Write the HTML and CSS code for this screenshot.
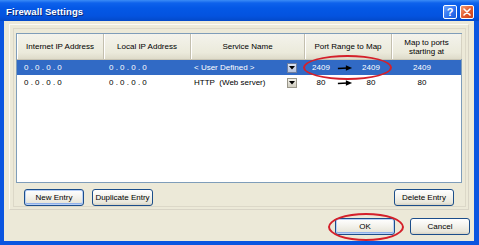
FILE: index.html
```html
<!DOCTYPE html>
<html>
<head>
<meta charset="utf-8">
<link rel="stylesheet" href="styles.css">
</head>
<body>
<div class="window">
  <div class="titlebar">
    <span class="title">Firewall Settings</span>
    <div class="tbtns">
      <span class="tbtn help">?</span>
      <span class="tbtn close"><svg width="8" height="8" viewBox="0 0 8 8"><path d="M1 1 L7 7 M7 1 L1 7" stroke="#fff" stroke-width="1.6" stroke-linecap="round"/></svg></span>
    </div>
  </div>
  <div class="client">
    <div class="panel">
      <div class="panel-inner">
        <div class="listview">
          <div class="lv-header">
            <div class="hc">Internet IP Address</div>
            <div class="hc">Local IP Address</div>
            <div class="hc">Service Name</div>
            <div class="hc">Port Range to Map</div>
            <div class="hc two">Map to ports<br>starting at</div>
          </div>
          <div class="lv-row selected">
            <div class="c c1">0 . 0 . 0 . 0</div>
            <div class="c c2">0 . 0 . 0 . 0</div>
            <div class="c c3"><span>&lt; User Defined &gt;</span><span class="dd"><svg width="6" height="4" viewBox="0 0 6 4"><path d="M0 0 H6 L3 3.5 Z" fill="#000"/></svg></span></div>
            <div class="c c4"><span class="n1">2409</span><span class="arr"><svg width="18" height="8" viewBox="0 0 18 8"><path d="M1 4.5 L12 4" stroke="#000" stroke-width="1.6"/><path d="M10 0.8 L17 4 L10 7.2 Z" fill="#000"/></svg></span><span class="n2">2409</span></div>
            <div class="c c5">2409</div>
          </div>
          <div class="lv-row">
            <div class="c c1">0 . 0 . 0 . 0</div>
            <div class="c c2">0 . 0 . 0 . 0</div>
            <div class="c c3"><span>HTTP&nbsp; (Web server)</span><span class="dd"><svg width="6" height="4" viewBox="0 0 6 4"><path d="M0 0 H6 L3 3.5 Z" fill="#000"/></svg></span></div>
            <div class="c c4"><span class="n1">80</span><span class="arr"><svg width="18" height="8" viewBox="0 0 18 8"><path d="M1 4.5 L12 4" stroke="#000" stroke-width="1.6"/><path d="M10 0.8 L17 4 L10 7.2 Z" fill="#000"/></svg></span><span class="n2">80</span></div>
            <div class="c c5">80</div>
          </div>
        </div>
        <div class="btn-row">
          <div class="btn-group">
            <button class="btn focus">New Entry</button>
            <button class="btn wide">Duplicate Entry</button>
          </div>
          <button class="btn">Delete Entry</button>
        </div>
      </div>
    </div>
    <div class="dialog-btns">
      <button class="btn default">OK</button>
      <button class="btn">Cancel</button>
    </div>
  </div>
  <div class="annot annot-port"></div>
  <div class="annot annot-ok"></div>
</div>
</body>
</html>
```

FILE: styles.css
```css
* { box-sizing: border-box; }
html, body { margin: 0; padding: 0; }
body {
  width: 479px;
  height: 245px;
  overflow: hidden;
  font-family: "Liberation Sans", Arial, sans-serif;
  font-size: 8px;
  color: #000;
}
.window {
  position: relative;
  width: 479px;
  height: 245px;
  background: #0a55e0;
  display: flex;
  flex-direction: column;
}
.titlebar {
  height: 21px;
  flex: none;
  display: flex;
  align-items: center;
  justify-content: space-between;
  padding: 0 5px 0 6px;
  background: linear-gradient(#3b8cf6 0, #0e62ec 3px, #0458e6 8px, #0453df 16px, #0349c9 21px);
}
.title {
  color: #fff;
  font-weight: bold;
  font-size: 9.5px;
  text-shadow: 1px 1px 0 #0a2a7a;
  letter-spacing: 0.1px;
  margin-top: 1px;
}
.tbtns { display: flex; gap: 3px; margin-top: 3px; }
.tbtn {
  width: 14px;
  height: 14px;
  border: 1px solid #fff;
  border-radius: 2px;
  display: flex;
  align-items: center;
  justify-content: center;
  color: #fff;
  font-weight: bold;
  font-size: 11px;
  line-height: 1;
}
.help { background: linear-gradient(135deg, #6aa1fb, #2a6ff0 60%, #1c5ad8); }
.close { background: linear-gradient(135deg, #f29a73, #e2582b 55%, #c9401c); }
.client {
  flex: none;
  height: 220px;
  margin: 0 5px 0 4px;
  background: #ece9d8;
  padding: 3px 0 0 0;
}
.panel {
  margin: 0 5px 0 5px;
  border: 1px solid #fbfaf6;
  border-right-color: #d8d4c6;
  border-bottom-color: #d8d4c6;
  padding: 3px 2px 2px 3px;
  height: 186px;
}
.panel-inner {
  height: 100%;
  border: 1px solid #dcd8c8;
  padding: 4px 3px 0 2px;
}
.listview {
  height: 150px;
  border: 1px solid #7f9db9;
  background: #fff;
}
.lv-header {
  display: grid;
  grid-template-columns: 87px 87px 114px 87px 70px;
  height: 26px;
  background: linear-gradient(#f4f3ec, #ebeadb 75%, #dedbca);
  border-bottom: 1px solid #c9c5b4;
}
.hc {
  display: flex;
  align-items: center;
  justify-content: center;
  text-align: center;
  border-right: 1px solid #c3bfae;
  box-shadow: inset 1px 0 0 #fff;
  line-height: 9px;
}
.hc:last-child { border-right: 1px solid #d6d2c2; }
.lv-row {
  display: grid;
  grid-template-columns: 87px 87px 114px 87px 70px;
  height: 15px;
  align-items: center;
}
.lv-row.selected { background: #316ac5; color: #fff; }
.c { white-space: nowrap; }
.c1 { padding-left: 7px; }
.c2 { padding-left: 5px; }
.c3 {
  display: flex;
  justify-content: space-between;
  align-items: center;
  padding-left: 3px;
  padding-right: 8px;
}
.dd {
  width: 10px;
  height: 10px;
  background: linear-gradient(#f2f1ea, #cfccbf);
  border: 1px solid #9a978a;
  display: flex;
  align-items: center;
  justify-content: center;
}
.selected .dd { background: linear-gradient(#dbe3f3, #b7c3dc); border-color: #6f7fa0; }
.c4 { display: flex; align-items: center; }
.n1 { width: 32px; text-align: center; }
.arr { width: 16px; display: flex; justify-content: center; }
.n2 { width: 36px; text-align: center; }
.c5 { text-align: center; padding-right: 10px; }
.btn-row {
  display: flex;
  justify-content: space-between;
  padding: 6px 8px 0 8px;
}
.btn-group { display: flex; gap: 8px; }
.btn {
  font-family: "Liberation Sans", Arial, sans-serif;
  font-size: 8px;
  color: #000;
  width: 60px;
  height: 17px;
  padding: 0;
  border: 1px solid #1c4e8a;
  border-radius: 3px;
  background: linear-gradient(#ffffff, #f5f4ef 40%, #e8e6da 85%, #d6d2c4);
}
.btn.wide { width: 61px; }
.btn.focus, .btn.default {
  box-shadow: inset 0 0 0 1px #b8d0f6, inset 0 -1px 0 1px #8fb0ea;
}
.dialog-btns {
  display: flex;
  justify-content: flex-end;
  gap: 15px;
  margin-top: 8px;
  padding-right: 4px;
}
.annot {
  position: absolute;
  border: 2px solid #d4202a;
  border-radius: 50%;
}
.annot-port { left: 303px; top: 55px; width: 89px; height: 25px; }
.annot-ok { left: 328px; top: 213px; width: 76px; height: 28px; }
```
